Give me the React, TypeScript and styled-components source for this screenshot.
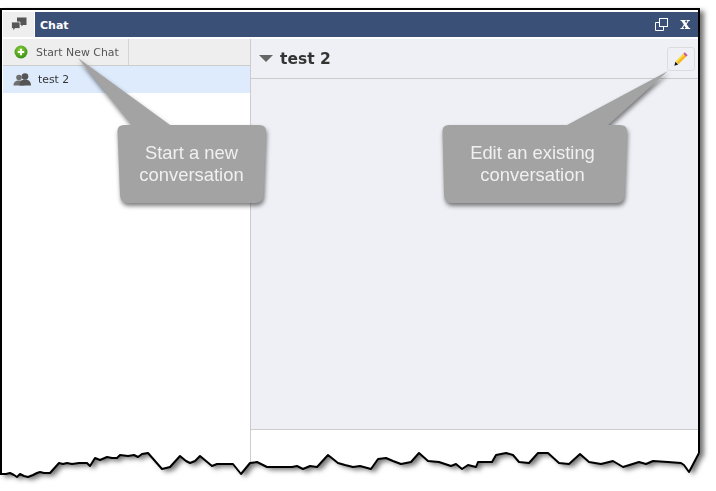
import React from "react";
import styled, { createGlobalStyle } from "styled-components";

const tear: [number, number][] = [
  [0, 474], [6, 474], [10, 473], [14, 475], [17, 477], [20, 474], [24, 476], [28, 477], [33, 475], [37, 473], [40, 472], [44, 473], [50, 473],
  [59, 463], [63, 464], [67, 463], [72, 464], [79, 463], [87, 463], [90, 466], [95, 458], [100, 460], [107, 457], [112, 458], [117, 458], [120, 455], [128, 456], [134, 455],
  [138, 457], [142, 454], [148, 453], [162, 469], [170, 467], [180, 456], [186, 461], [190, 463], [195, 461], [200, 456], [212, 466], [217, 464], [225, 464], [233, 464],
  [241, 474], [250, 463], [257, 462], [263, 465], [267, 467], [280, 467], [292, 467], [297, 466], [303, 469], [310, 466], [317, 467], [328, 455], [338, 463], [345, 465], [353, 467],
  [360, 466], [371, 469], [378, 459], [386, 458], [393, 461], [401, 464], [411, 462], [419, 453], [428, 461], [439, 462], [451, 466], [456, 464],
  [462, 469], [468, 465], [476, 467], [478, 462], [492, 462], [496, 455], [506, 453], [513, 455], [519, 462], [529, 463], [538, 453], [548, 453],
  [559, 463], [569, 464], [580, 454], [589, 462], [601, 464], [613, 461], [623, 467], [639, 462], [646, 464], [653, 461], [668, 462], [681, 463],
  [684, 465], [689, 472], [699, 453],
];

const WINDOW_TOP = 8;
const clipPolygon =
  "polygon(0px 0px, 700px 0px, 700px " + (453 - WINDOW_TOP) + "px, " +
  tear.slice().reverse().map(([x, y]) => `${x}px ${y - WINDOW_TOP}px`).join(", ") + ")";
const tearLine = tear.map(([x, y]) => `${x},${y}`).join(" ");

const Global = createGlobalStyle`
  html, body { margin: 0; padding: 0; background: #fff; }
  body { width: 716px; height: 491px; overflow: hidden; font-family: "DejaVu Sans", sans-serif; }
`;

const Page = styled.div`
  position: relative;
  width: 716px;
  height: 491px;
  padding-top: ${WINDOW_TOP}px;
  box-sizing: border-box;
  background: #fff;
`;

const Shadowed = styled.div`
  width: 700px;
  height: 472px;
  filter: drop-shadow(4px 3px 2.5px rgba(0, 0, 0, 0.55));
`;

const Window = styled.div`
  width: 700px;
  height: 472px;
  box-sizing: border-box;
  border: solid #000;
  border-width: 2px 2px 0 2px;
  background: #fff;
  padding: 2px 0 0 1px;
  display: flex;
  flex-direction: column;
`;

const TitleBar = styled.div`
  height: 25px;
  display: flex;
  flex: none;
`;

const TitleIconCell = styled.div`
  width: 31px;
  margin-right: 1px;
  background: #eeeeee;
  display: flex;
  align-items: center;
  justify-content: center;
`;

const TitleBlue = styled.div`
  flex: 1;
  background: #3b5077;
  display: flex;
  align-items: center;
  padding: 0 8px 0 5px;
  color: #fff;
`;

const TitleText = styled.span`
  flex: 1;
  font: bold 11px "DejaVu Sans", sans-serif;
  margin-top: 1px;
`;

const CloseGlyph = styled.span`
  font: bold 16px "DejaVu Serif", serif;
  margin-left: 12px;
  line-height: 14px;
  margin-top: -2px;
`;

const Columns = styled.div`
  flex: 1;
  margin-top: 2px;
  display: flex;
  min-height: 0;
`;

const Sidebar = styled.div`
  width: 247px;
  flex: none;
  border-right: 1px solid #cccccc;
  display: flex;
  flex-direction: column;
`;

const Toolbar = styled.div`
  height: 26px;
  flex: none;
  background: #eeeeee;
  border-bottom: 1px solid #cccccc;
  display: flex;
`;

const NewChatButton = styled.div`
  width: 126px;
  box-sizing: border-box;
  border-right: 1px solid #d4d4d4;
  display: flex;
  align-items: center;
  padding-left: 11px;
  gap: 8px;
  font-size: 10.9px;
  color: #555;
`;

const ChatRow = styled.div`
  height: 27px;
  flex: none;
  background: #deebfc;
  display: flex;
  align-items: center;
  padding-left: 10px;
  gap: 6px;
  font-size: 10.8px;
  color: #333;
`;

const Main = styled.div`
  flex: 1;
  display: flex;
  flex-direction: column;
  min-width: 0;
`;

const MainHeader = styled.div`
  height: 40px;
  flex: none;
  box-sizing: border-box;
  background: #eff0f5;
  border-bottom: 1px solid #cccccc;
  display: flex;
  align-items: center;
  padding: 0 3px 0 8px;
`;

const Caret = styled.div`
  width: 0;
  height: 0;
  border-left: 7px solid transparent;
  border-right: 7px solid transparent;
  border-top: 7px solid #666;
  margin-right: 7px;
`;

const MainTitle = styled.span`
  flex: 1;
  font: bold 15.5px "DejaVu Sans", sans-serif;
  color: #333;
  margin-top: 1px;
`;

const EditButton = styled.div`
  width: 28px;
  height: 24px;
  box-sizing: border-box;
  border: 1px solid #dcdcdc;
  border-radius: 3px;
  background: #eff0f5;
  display: flex;
  align-items: center;
  justify-content: center;
`;

const MainBody = styled.div`
  height: 351px;
  flex: none;
  box-sizing: border-box;
  background: #eff0f5;
  border-bottom: 1px solid #cccccc;
`;

const TearLine = styled.svg`
  position: absolute;
  left: 0;
  top: 0;
  width: 716px;
  height: 491px;
  pointer-events: none;
`;

const CalloutShape = styled.svg`
  position: absolute;
  left: 0;
  top: 0;
  width: 716px;
  height: 491px;
  pointer-events: none;
  filter: drop-shadow(1px 3px 2px rgba(0, 0, 0, 0.5));
`;

const CalloutText = styled.div<{ $left: number; $width: number }>`
  position: absolute;
  left: ${(p) => p.$left}px;
  width: ${(p) => p.$width}px;
  top: 142px;
  text-align: center;
  font: 18.4px/22px "Liberation Sans", Arial, sans-serif;
  color: #f0f0f0;
`;

const ChatsIcon = () => (
  <svg width="16" height="15" viewBox="0 0 16 15">
    <path d="M6 0.500h9.500v7.500H12l-1.500 1.600V8H6z" fill="#555" />
    <path d="M0.500 5H9v6.500H4L2 14v-2.500H0.500z" fill="#555" stroke="#eee" strokeWidth="0.8" />
  </svg>
);

const PlusIcon = () => (
  <svg width="14" height="14" viewBox="0 0 14 14">
    <defs>
      <radialGradient id="plusGreen" cx="45%" cy="35%" r="70%">
        <stop offset="0" stopColor="#8fd13f" />
        <stop offset="1" stopColor="#2f8a10" />
      </radialGradient>
    </defs>
    <circle cx="7" cy="7" r="6.500" fill="url(#plusGreen)" />
    <path d="M7 3.800v6.400M3.800 7h6.400" stroke="#fff" strokeWidth="2" />
  </svg>
);

const UsersIcon = () => (
  <svg width="19" height="13" viewBox="0 0 19 13">
    <circle cx="6" cy="4.500" r="2.800" fill="#6e6e6e" />
    <path d="M0.500 12.500c0-3.500 2-5 5.500-5s5.500 1.500 5.500 5z" fill="#6e6e6e" />
    <circle cx="12" cy="3.500" r="3.300" fill="#555" />
    <path d="M6.500 12.500c0-4 2-6 5.500-6s6 2 6 6z" fill="#555" />
  </svg>
);

const RestoreIcon = () => (
  <svg width="13" height="13" viewBox="0 0 13 13" fill="none" stroke="#fff" strokeWidth="1">
    <rect x="4.500" y="0.500" width="8" height="8" />
    <path d="M4.500 4.500H0.500v8h8V8.500" />
  </svg>
);

const PencilIcon = () => (
  <svg width="14" height="14" viewBox="0 0 12 12">
    <path d="M0.300 11.700l0.900-3.300 2.400 2.400z" fill="#111" />
    <path d="M1.400 8.200L8 1.600l2.400 2.400-6.600 6.600z" fill="#f5b81e" />
    <path d="M1.400 8.200L8 1.600l0.900 0.900-6.600 6.600z" fill="#f9e04a" />
    <path d="M8 1.600l1.300-1.300 2.400 2.400L10.400 4z" fill="#c65a9a" />
  </svg>
);

export default function App() {
  return (
    <Page>
      <Global />
      <Shadowed>
        <Window style={{ clipPath: clipPolygon }}>
          <TitleBar>
            <TitleIconCell>
              <ChatsIcon />
            </TitleIconCell>
            <TitleBlue>
              <TitleText>Chat</TitleText>
              <RestoreIcon />
              <CloseGlyph>x</CloseGlyph>
            </TitleBlue>
          </TitleBar>
          <Columns>
            <Sidebar>
              <Toolbar>
                <NewChatButton>
                  <PlusIcon />
                  <span>Start New Chat</span>
                </NewChatButton>
              </Toolbar>
              <ChatRow>
                <UsersIcon />
                <span>test 2</span>
              </ChatRow>
            </Sidebar>
            <Main>
              <MainHeader>
                <Caret />
                <MainTitle>test 2</MainTitle>
                <EditButton>
                  <PencilIcon />
                </EditButton>
              </MainHeader>
              <MainBody />
            </Main>
          </Columns>
        </Window>
      </Shadowed>
      <TearLine viewBox="0 0 716 491">
        <polyline points={tearLine} fill="none" stroke="#000" strokeWidth="2" strokeLinejoin="round" />
      </TearLine>
      <CalloutShape viewBox="0 0 716 491">
        <path
          d="M78 58L132 125H124Q117 125 117.500 132L120 195Q120.500 203 128 203H255Q263 203 263.500 195L266 132Q266.500 125 259 125H170z"
          fill="#a3a3a3"
        />
        <path
          d="M668 71L567 125H449Q442 125 442.500 132L444 195Q444.500 203 452 203H616Q624 203 624.500 195L627 132Q627.500 125 620 125H608z"
          fill="#a3a3a3"
        />
      </CalloutShape>
      <CalloutText $left={117} $width={149}>
        Start a new
        <br />
        conversation
      </CalloutText>
      <CalloutText $left={442} $width={181}>
        Edit an existing
        <br />
        conversation
      </CalloutText>
    </Page>
  );
}
